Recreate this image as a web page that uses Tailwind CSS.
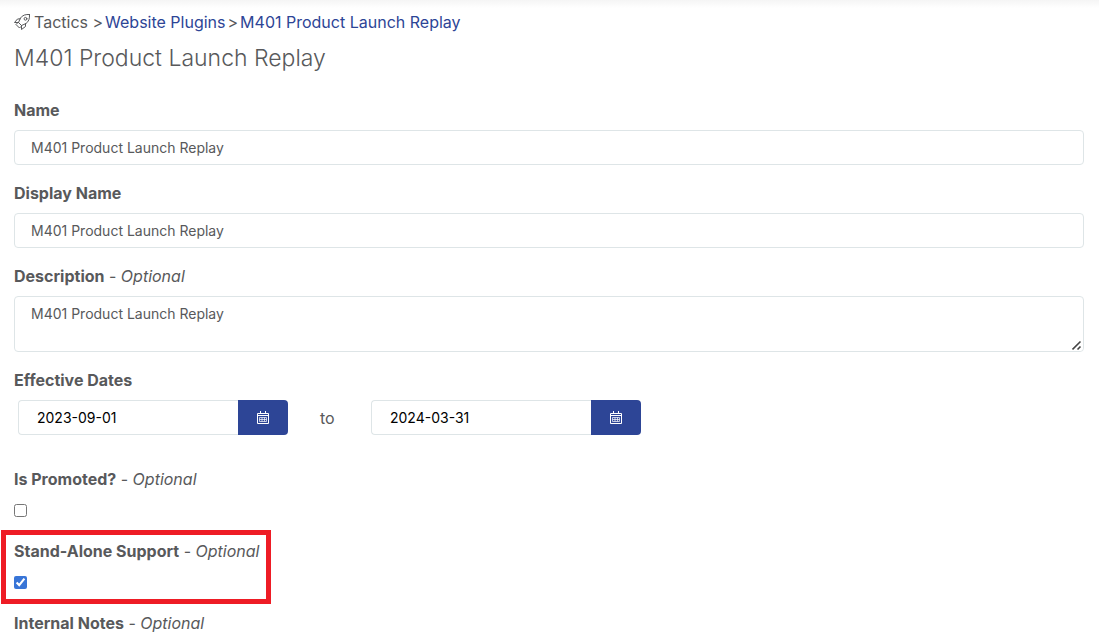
<!DOCTYPE html>
<html lang="en">
<head>
  <meta charset="UTF-8" />
  <meta name="viewport" content="width=device-width, initial-scale=1.0" />
  <title>M401 Product Launch Replay</title>
  <script src="https://cdn.jsdelivr.net/npm/@tailwindcss/browser@4"></script>
</head>
<body class="bg-white font-['Inter',sans-serif] text-base text-[#58595b]">
  <div class="h-2 bg-linear-to-b from-[#f5f5f5] to-white"></div>
  <main class="pl-[14px] pr-[15px] pb-1">
    <nav class="flex items-center h-7" aria-label="Breadcrumb">
      <svg class="w-4 h-4 mr-1" viewBox="0 0 16 16" fill="none" stroke="#58595b" stroke-width="1" stroke-linejoin="round" stroke-linecap="round" aria-hidden="true">
        <path d="M15.500.5C11.500.2 8.500 1.200 6.500 4L4.500 8.500l3 3L12 9.500C14.800 7.500 15.800 4.500 15.500.5z" />
        <path d="M6.200 4.800L3.500 5 .5 8.500h4M11.500 9.800v2.700L7.500 15.500v-4M3.500 9l-1.500 1.500 3.500 3.500 1.500-1.500" />
        <circle cx="11.500" cy="4.800" r="1.400" />
      </svg>
      <span>Tactics &gt;</span>
      <a href="#" class="ml-0.5 text-[#2d4596]">Website Plugins</a>
      <span class="mx-0.5">&gt;</span>
      <a href="#" class="text-[#2d4596]">M401 Product Launch Replay</a>
    </nav>
    <h1 class="mt-1 text-[23px] leading-9 font-light">M401 Product Launch Replay</h1>

    <form class="mt-[22px] flex flex-col gap-4">
      <div class="flex flex-col gap-2">
        <label for="name" class="font-bold">Name</label>
        <input id="name" type="text" value="M401 Product Launch Replay" class="w-full h-[35px] border border-[#dee5e7] rounded px-4 text-sm" />
      </div>
      <div class="flex flex-col gap-2">
        <label for="displayName" class="font-bold">Display Name</label>
        <input id="displayName" type="text" value="M401 Product Launch Replay" class="w-full h-[35px] border border-[#dee5e7] rounded px-4 text-sm" />
      </div>
      <div class="flex flex-col gap-2">
        <label for="description"><b class="font-bold">Description</b> - <i>Optional</i></label>
        <div class="relative">
          <textarea id="description" class="block w-full h-14 border border-[#dee5e7] rounded px-4 py-[7px] text-sm resize-y">M401 Product Launch Replay</textarea>
          <svg class="absolute right-px bottom-px w-[11px] h-[11px] bg-white rounded-br pointer-events-none" viewBox="0 0 11 11" stroke="#444" stroke-width="1.6" aria-hidden="true">
            <path d="M.5 9.500l8-8M5.500 9.500l3-3" />
          </svg>
        </div>
      </div>
      <div class="flex flex-col gap-2">
        <label for="startDate" class="font-bold">Effective Dates</label>
        <div class="flex items-center ml-1">
          <div class="flex w-[270px]">
            <input id="startDate" type="text" value="2023-09-01" class="min-w-0 flex-1 h-[35px] border border-r-0 border-[#dee5e7] rounded-l px-[18px] text-sm text-black" />
            <button type="button" aria-label="Pick start date" class="w-[50px] h-[35px] flex items-center justify-center bg-[#2d4596] text-white rounded-r">
              <svg class="w-3 h-[13px]" viewBox="0 0 12 13" fill="none" stroke="currentColor" aria-hidden="true">
                <path d="M.5 2.500h11v10H.5zM3.500 0v2.500M8.500 0v2.500M1 4.500h10" />
                <path d="M2.500 6.500h7v4h-7zM2.500 8.500h7M5 6.500v4M7.500 6.500v4" stroke-opacity=".7" />
              </svg>
            </button>
          </div>
          <label for="endDate" class="w-[83px] pl-8">to</label>
          <div class="flex w-[270px]">
            <input id="endDate" type="text" value="2024-03-31" class="min-w-0 flex-1 h-[35px] border border-r-0 border-[#dee5e7] rounded-l px-[18px] text-sm text-black" />
            <button type="button" aria-label="Pick end date" class="w-[50px] h-[35px] flex items-center justify-center bg-[#2d4596] text-white rounded-r">
              <svg class="w-3 h-[13px]" viewBox="0 0 12 13" fill="none" stroke="currentColor" aria-hidden="true">
                <path d="M.5 2.500h11v10H.5zM3.500 0v2.500M8.500 0v2.500M1 4.500h10" />
                <path d="M2.500 6.500h7v4h-7zM2.500 8.500h7M5 6.500v4M7.500 6.500v4" stroke-opacity=".7" />
              </svg>
            </button>
          </div>
        </div>
      </div>
      <div class="mt-4 flex flex-col items-start gap-2">
        <label for="isPromoted"><b class="font-bold">Is Promoted?</b> - <i>Optional</i></label>
        <div class="flex items-start h-6 pt-[5px]">
          <input id="isPromoted" type="checkbox" class="w-[13px] h-[13px]" />
        </div>
      </div>
      <div class="relative flex flex-col items-start gap-2 self-start">
        <!-- highlight frame -->
        <div class="absolute -top-[9px] -bottom-[9px] -left-[13px] -right-3 border-5 border-[#ee1c25] pointer-events-none"></div>
        <label for="standAlone"><b class="font-bold">Stand-Alone Support</b> - <i>Optional</i></label>
        <div class="flex items-start h-6 pt-[5px]">
          <input id="standAlone" type="checkbox" checked class="w-[13px] h-[13px] accent-[#3875d7]" />
        </div>
      </div>
      <div>
        <span><b class="font-bold">Internal Notes</b> - <i>Optional</i></span>
      </div>
    </form>
  </main>
</body>
</html>
